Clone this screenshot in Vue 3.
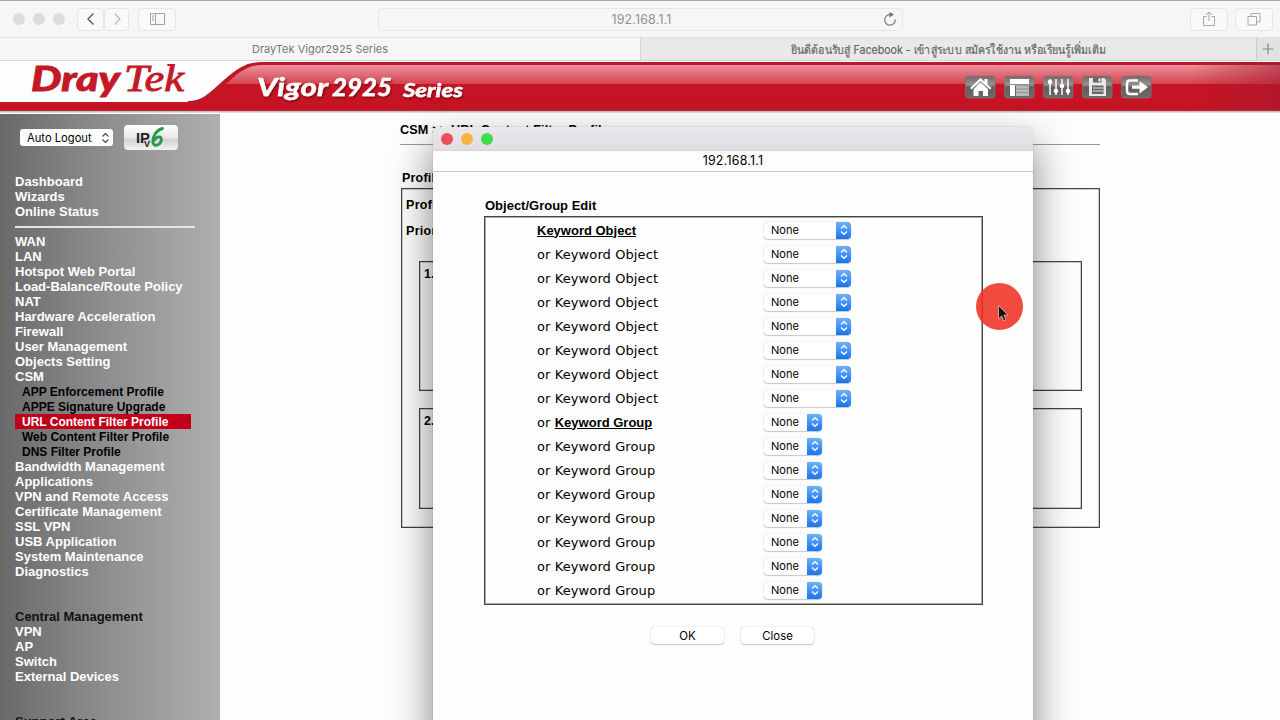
<script setup>
const top = ['Dashboard', 'Wizards', 'Online Status']
const menu = [
  ['WAN'], ['LAN'], ['Hotspot Web Portal'], ['Load-Balance/Route Policy'], ['NAT'],
  ['Hardware Acceleration'], ['Firewall'], ['User Management'], ['Objects Setting'], ['CSM'],
  ['APP Enforcement Profile', 'sub'], ['APPE Signature Upgrade', 'sub'],
  ['URL Content Filter Profile', 'sub active'], ['Web Content Filter Profile', 'sub'],
  ['DNS Filter Profile', 'sub'],
  ['Bandwidth Management'], ['Applications'], ['VPN and Remote Access'],
  ['Certificate Management'], ['SSL VPN'], ['USB Application'], ['System Maintenance'], ['Diagnostics'],
]
const central = ['VPN', 'AP', 'Switch', 'External Devices']
const rows = Array.from({ length: 16 }, (_, i) => ({
  group: i > 7,
  head: i === 0 || i === 8,
  or: i > 0,
  label: i > 7 ? 'Keyword Group' : 'Keyword Object',
}))
</script>

<template>
  <div class="screen">
    <div class="toolbar">
      <div class="lights grey"><i></i><i></i><i></i></div>
      <div class="btn nav back"><svg width="10" height="14" viewBox="0 0 10 14"><path d="M7.500 1.500L2 7l5.500 5.500" fill="none" stroke="#666" stroke-width="1.500" /></svg></div>
      <div class="btn nav fwd"><svg width="10" height="14" viewBox="0 0 10 14"><path d="M2.500 1.500L8 7l-5.500 5.500" fill="none" stroke="#bbb" stroke-width="1.300" /></svg></div>
      <div class="btn side"><svg width="16" height="13" viewBox="0 0 16 13" fill="none" stroke="#a0a0a0"><path d="M1.500.5h14v11h-14zM6.500.5v11M3 3h2M3 5h2M3 7h2" /></svg></div>
      <div class="address">
        <span>192.168.1.1</span>
        <svg class="reload" width="14" height="14" viewBox="0 0 14 14"><path d="M12.300 7.500A5.300 5.300 0 1 1 7 2.500" fill="none" stroke="#808080" stroke-width="1.300" /><path d="M6.500 0L11 2.600 6.500 5.400z" fill="#707070" /></svg>
      </div>
      <div class="btn share"><svg width="12" height="16" viewBox="0 0 12 16" fill="none" stroke="#a8a8a8"><path d="M3.500 5.500h-3v9h11v-9h-3M6 10V1M3 4l3-3 3 3" /></svg></div>
      <div class="btn tabsbtn"><svg width="14" height="14" viewBox="0 0 14 14" fill="none" stroke="#a8a8a8"><path d="M1 4.500h8.500V13H1zM4 4.500V1.500h9V10H9.500" /></svg></div>
    </div>
    <div class="tabs">
      <div class="tab on"><span class="t1">DrayTek Vigor2925 Series</span></div>
      <div class="tab"><svg class="t2" width="316" height="22"><text x="0" y="15.500" textLength="315" lengthAdjust="spacingAndGlyphs">ยินดีต้อนรับสู่ Facebook - เข้าสู่ระบบ สมัครใช้งาน หรือเรียนรู้เพิ่มเติม</text></svg></div>
      <div class="plus"><svg width="12" height="12"><path d="M6 .5v11M.5 6h11" stroke="#888" stroke-width="1.200" /></svg></div>
    </div>

    <svg class="banner" width="1280" height="53" viewBox="0 61 1280 53">
      <defs>
        <linearGradient id="gloss" x1="0" x2="0" y1="0" y2="1">
          <stop offset="0" stop-color="#eb929d" /><stop offset="1" stop-color="#d6434f" />
        </linearGradient>
        <linearGradient id="edge"><stop offset="0" stop-color="#a51a2d" stop-opacity="0" /><stop offset="1" stop-color="#a51a2d" stop-opacity=".6" /></linearGradient>
        <linearGradient id="key" x1="0" x2="0" y1="0" y2="1">
          <stop offset="0" stop-color="#7d6466" /><stop offset=".4" stop-color="#959292" /><stop offset=".5" stop-color="#625e5e" /><stop offset="1" stop-color="#6e6a6a" />
        </linearGradient>
        <filter id="ts" x="-10%" y="-20%" width="120%" height="150%"><feDropShadow dx="1" dy="1.500" stdDeviation=".8" flood-color="#600" flood-opacity=".75" /></filter>
      </defs>
      <rect y="61" width="1280" height="53" fill="#fdfdfd" />
      <path d="M0 102H188C203 102 211 93 222 83C235 71 245 62.500 262 62.500H1280V111H0z" fill="#c61424" />
      <path d="M226 84C239 72 247 65 262 65H1280V84z" fill="url(#gloss)" />
      <path d="M188 102C203 102 211 93 222 83C235 71 245 63 262 63H1280" fill="none" stroke="#b21d2e" stroke-width="2" />
      <rect x="1190" y="62" width="90" height="49" fill="url(#edge)" />
      <rect y="110" width="1280" height="1" fill="#aa3340" /><rect y="111" width="1280" height="1.500" fill="#d0b4b6" />
      <g fill="#c41828">
        <text x="31" y="91" class="dray" textLength="89" lengthAdjust="spacingAndGlyphs">Dray</text>
        <text x="124" y="91" class="tek" textLength="60" lengthAdjust="spacingAndGlyphs">Tek</text>
      </g>
      <g fill="#fff" class="vigor" filter="url(#ts)">
        <text x="257" y="96" font-size="25" textLength="71" lengthAdjust="spacingAndGlyphs">Vigor</text>
        <text x="332" y="96" font-size="25" textLength="60" lengthAdjust="spacingAndGlyphs">2925</text>
        <text x="403" y="97" font-size="19" textLength="60" lengthAdjust="spacingAndGlyphs">Series</text>
      </g>
      <g fill="url(#key)" stroke="#837979" stroke-width=".7">
        <rect v-for="n in 5" :key="n" :x="926.500 + n * 39" y="76" width="29.500" height="22" rx="2.500" />
      </g>
      <g fill="#fff">
        <path d="M970 88L980.500 78l4 3.800V79h3v5.500L991.500 88l-1.500 1.500L980.500 81 971.500 89.500z" />
        <path d="M973.500 89L980.500 82.500 988 89v7h-5v-5h-4.500v5h-5z" />
        <path d="M1010 79h19v5h-19zM1010 85h5v11h-5z" /><path d="M1016 85.500h13V96h-13z" fill="#bab7b7" /><path d="M1016 89h13M1016 92.500h13" stroke="#989494" />
      </g>
      <g stroke="#fff" stroke-width="1.500" fill="#fff">
        <path d="M1050 79v16M1056 79v16M1062 79v16M1068 79v16" />
        <g stroke="none"><circle cx="1050" cy="82" r="2.300" /><circle cx="1056" cy="91" r="2.300" /><circle cx="1062" cy="86" r="2.300" /><circle cx="1068" cy="91" r="2.300" /></g>
      </g>
      <path d="M1089 78h15l2 2v16h-17z" fill="#e8e8e8" /><path d="M1093 78h8.500v4.500H1093zM1092 85.500h11.500V94H1092z" fill="#666" /><path d="M1098.500 78.500h2v3h-2z" fill="#fff" /><path d="M1093 88h10M1093 91h10" stroke="#bbb" stroke-width="1.300" />
      <path d="M1138 80.500h-8q-3 0-3 3v7.500q0 3 3 3h8" fill="none" stroke="#fff" stroke-width="2.500" /><path d="M1132 85.500h7.500v-4.500l8.500 6.200-8.500 6.200v-4.600h-7.500z" fill="#fff" />
    </svg>

    <div class="body">
      <aside>
        <div class="controls">
          <div class="logout"><span>Auto Logout</span><svg width="9" height="12" viewBox="0 0 9 12"><path d="M1.500 4.500l3-3 3 3M1.500 7.500l3 3 3-3" fill="none" stroke="#444" stroke-width="1.100" /></svg></div>
          <div class="ipv6"><svg width="54" height="25" viewBox="0 0 54 25">
            <text x="12" y="17.500" font-size="15" font-weight="bold" fill="#222" textLength="14" lengthAdjust="spacingAndGlyphs">IP</text>
            <text x="20" y="21.500" font-size="9" font-weight="bold" fill="#222">V</text>
            <path d="M38.500 3.500C33 4.500 28.500 11 28.800 17c.4 5 7.200 4 8.500-1.500.9-4-3.500-5.500-7-.5" fill="none" stroke="#219c47" stroke-width="2.800" stroke-linecap="round" /></svg></div>
        </div>
        <ul class="first"><li v-for="t in top" :key="t">{{ t }}</li></ul>
        <ul class="main"><li v-for="m in menu" :key="m[0]" :class="m[1]">{{ m[0] }}</li></ul>
        <ul class="central"><li class="dark">Central Management</li><li v-for="t in central" :key="t">{{ t }}</li></ul>
        <ul class="support"><li class="dark">Support Area</li></ul>
      </aside>
      <main>
        <h1>CSM &gt;&gt; URL Content Filter Profile</h1>
        <h2>Profile Index: 1</h2>
        <div class="frame">
          <p>Profile Name:</p>
          <p class="prio">Priority:</p>
          <div class="box b1">1.</div>
          <div class="box b2">2.</div>
        </div>
      </main>
    </div>

    <section class="dialog">
      <div class="titlebar"><div class="lights"><i class="r"></i><i class="y"></i><i class="g"></i></div></div>
      <div class="url"><span>192.168.1.1</span></div>
      <h3>Object/Group Edit</h3>
      <div class="list">
        <div v-for="(r, i) in rows" :key="i" class="row">
          <div class="label"><span v-if="r.or">or&nbsp;</span><b v-if="r.head">{{ r.label }}</b><span v-else>{{ r.label }}</span></div>
          <div class="select" :class="{ narrow: r.group }"><span>None</span><em><svg width="8" height="12" viewBox="0 0 8 12"><path d="M1 4.500L4 1.700l3 2.800M1 7.500l3 2.800 3-2.800" fill="none" stroke="#fff" stroke-width="1.300" /></svg></em></div>
        </div>
      </div>
      <div class="actions"><div>OK</div><div>Close</div></div>
    </section>
    <div class="spot"></div>
    <svg class="cursor" width="14" height="20" viewBox="0 0 14 20"><path d="M1.500 1.500v13.500l3.200-3 2.100 4.800 2.200-1-2.100-4.700h4.200z" fill="#111" stroke="#d9b0ac" stroke-width=".9" /></svg>
  </div>
</template>

<style>
body { margin: 0; overflow: hidden; background: #fdfdfd; }
</style>
<style scoped>
* { box-sizing: border-box; }
.screen { position: relative; width: 1280px; height: 720px; overflow: hidden; background: #fdfdfd; font: bold 13px/15px "Liberation Sans", Arial, sans-serif; color: #000; }
.toolbar { height: 38px; background: #f6f6f6; border-top: 1px solid #aaa9b3; border-bottom: 1px solid #e1e1e1; display: flex; align-items: center; padding: 0 7px 0 13px; }
.lights { display: flex; gap: 8px; }
.lights i { width: 12px; height: 12px; border-radius: 50%; background: #dcdcdc; }
.lights .r { background: #ee4e5c; } .lights .y { background: #f6b53f; } .lights .g { background: #3fdc4e; }
.btn { height: 23px; border: 1px solid #e6e6e6; border-radius: 4px; display: flex; align-items: center; justify-content: center; background: #f9f9f9; }
.back { width: 27px; margin-left: 12px; } .fwd { width: 25px; } .side { width: 38px; margin-left: 9px; }
.address { position: relative; margin-left: 202px; width: 525px; height: 23px; border: 1px solid #e6e6e6; border-radius: 4px; display: flex; align-items: center; justify-content: center; color: #929292; font: 12.4px "Inter", sans-serif; padding-left: 2px; letter-spacing: .2px; }
.reload { position: absolute; right: 5px; top: 3px; }
.share { width: 38px; margin-left: auto; } .tabsbtn { width: 38px; margin-left: 7px; }
.tabs { height: 23px; display: flex; border-bottom: 1px solid #d5d5d5; font: 11px "Inter", "Noto Sans", sans-serif; color: #777; }
.tab { flex: 0 0 640px; display: flex; align-items: center; justify-content: center; background: #f6f6f6; }
.tab + .tab { flex-basis: 616px; background: #e9e9e9; border-left: 1px solid #d5d5d5; }
.t2 { font-size: 12px; fill: #666; font-family: "Inter", "Noto Sans", sans-serif; stroke: #666; stroke-width: .2px; }
.plus { flex: 1; background: #e2e2e2; border-left: 1px solid #ccc; display: flex; align-items: center; justify-content: center; padding-right: 1px; }
.banner { display: block; }
.dray { font: italic 900 35px "Lato", sans-serif; stroke: #c41828; stroke-width: .8px; }
.tek { font: italic 38px "Liberation Serif", serif; stroke: #c41828; stroke-width: .9px; }
.vigor { font-family: "Lato", sans-serif; font-style: italic; font-weight: bold; stroke: #fff; stroke-width: .5px; }
.body { display: flex; height: 606px; }
aside { width: 220px; flex: none; background: linear-gradient(90deg, #696969, #828282 32%, #999 65%, #afafaf); color: #fff; font-size: 13px; overflow: hidden; }
.controls { display: flex; gap: 11px; padding: 11px 0 0 20px; align-items: center; }
.logout { width: 93px; height: 17px; border-radius: 3px; background: #fdfdfd; color: #000; font: 11.200px "Inter", sans-serif; display: flex; align-items: center; justify-content: space-between; padding: 0 3px 0 7px; }
.ipv6 { width: 54px; height: 25px; border-radius: 4px; background: linear-gradient(#fff, #e9e9e9 50%, #d2d2d2 60%, #f5f5f5); }
.ipv6 svg { display: block; }
ul { list-style: none; margin: 0 0 0 15px; padding: 0; white-space: nowrap; }
li { height: 15px; }
.first { margin-top: 24px; width: 180px; height: 54px; border-bottom: 2px solid #e5e5e5; }
.main { padding-top: 6px; }
.sub { color: #000; padding-left: 7px; font-size: 12px; line-height: 17px; }
.active { background: #c3001a; color: #fff; width: 176px; }
.central { margin-top: 30px; } .support { margin-top: 30px; }
.dark { color: #111; }
main { flex: 1; padding: 8px 180px 0 180px; font-size: 12.500px; }
h1 { font-size: 12.700px; margin: 0; line-height: 17px; height: 23px; border-bottom: 1px solid #999; width: 700px; letter-spacing: .12px; }
h2 { font-size: 12.500px; margin: 25px 0 0 2px; line-height: 16px; height: 15px; letter-spacing: .2px; }
.frame { margin: 3px 0 0 1px; width: 699px; height: 340px; border: 1px solid #444; box-shadow: inset 0 0 0 .5px #999; padding: 9px 17px 0 17px; }
.frame p { margin: 0 0 0 -13px; letter-spacing: .3px; } .frame .prio { margin-top: 11px; }
.box { border: 1px solid #444; box-shadow: inset 0 0 0 .5px #999; padding: 5px 0 0 4px; width: 663px; }
.b1 { height: 130px; margin-top: 22px; } .b2 { height: 101px; margin-top: 17px; }
.dialog { position: absolute; left: 433px; top: 127px; width: 600px; height: 640px; background: #fdfdfd; border-radius: 5px 5px 0 0; box-shadow: 0 0 1px rgba(0,0,0,.45), 0 18px 40px rgba(0,0,0,.5); }
.titlebar { height: 24px; border-radius: 5px 5px 0 0; background: linear-gradient(#ebe8ec, #e1dee3); padding: 6px 8px; border-bottom: 1px solid #d7d4d9; }
.url { height: 21px; border-bottom: 1px solid #c8c8c8; text-align: center; font: 12.400px/19px "Inter", sans-serif; letter-spacing: .25px; }
h3 { margin: 26px 0 0 52px; font-size: 13px; line-height: 15px; }
.list { margin: 3px 0 0 51px; width: 499px; height: 389px; border: 1px solid #444; box-shadow: inset 0 0 0 1px #aaa; padding-top: 1px; }
.row { height: 24px; display: flex; align-items: center; padding-left: 52px; }
.label { width: 227px; font: 13px/16px "DejaVu Sans", Verdana, sans-serif; letter-spacing: .1px; white-space: nowrap; padding-top: 1px; }
.label b { font: bold 13px/16px "Liberation Sans", sans-serif; letter-spacing: 0; text-decoration: underline; }
.select { width: 87px; height: 17px; border-radius: 4px; background: #fff; box-shadow: 0 0 1px #999, 0 1px 1px #ccc; display: flex; justify-content: space-between; align-items: center; padding-left: 7px; font: 11px "Inter", sans-serif; }
.narrow { width: 58px; }
.select em { width: 15px; height: 17px; border-radius: 0 4px 4px 0; background: linear-gradient(#6fb1f6, #1873f3); display: flex; align-items: center; justify-content: center; }
.actions { display: flex; gap: 17px; margin: 22px 0 0 218px; }
.actions div { width: 73px; height: 17px; border-radius: 4px; background: #fff; box-shadow: 0 0 1px #999, 0 1px 1px #ccc; text-align: center; font: 11.400px/18px "Inter", sans-serif; }
.spot { position: absolute; left: 975.500px; top: 282.500px; width: 47px; height: 47px; border-radius: 50%; background: rgba(240,44,32,.86); }
.cursor { position: absolute; left: 997px; top: 304px; }
</style>
